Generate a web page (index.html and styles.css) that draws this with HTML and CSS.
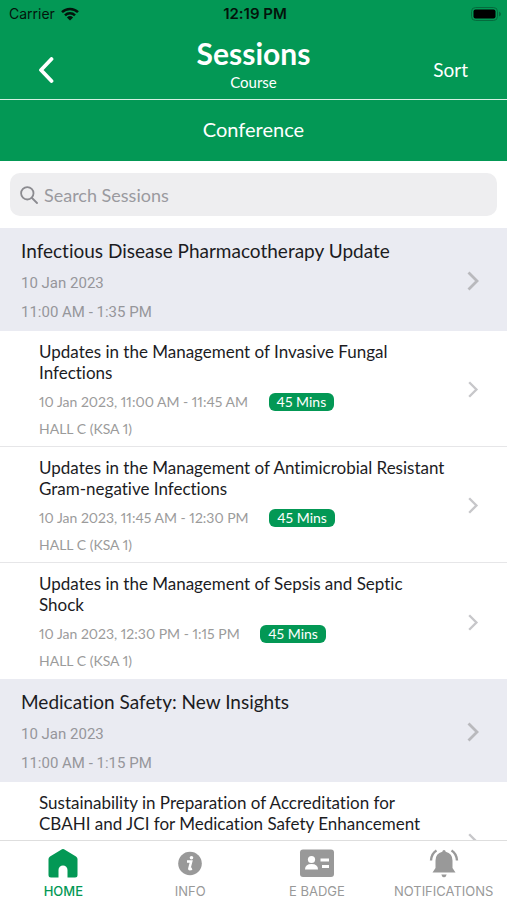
FILE: index.html
```html
<!DOCTYPE html>
<html lang="en">
<head>
<meta charset="utf-8">
<meta name="viewport" content="width=device-width, initial-scale=1">
<title>Sessions</title>
<link rel="stylesheet" href="styles.css">
</head>
<body>
<svg class="sprite" aria-hidden="true">
  <symbol id="chevron" viewBox="0 0 12 20"><path d="M1.500 1.500L10 10l-8.500 8.500" fill="none" stroke="currentColor" stroke-width="2.800"/></symbol>
</svg>
<div class="app">
  <header class="top">
    <div class="status">
      <span class="carrier">Carrier
        <svg class="wifi" viewBox="0 0 18 14" aria-hidden="true"><g fill="none" stroke="currentColor" stroke-width="2.500"><path d="M1 5.200a11.500 11.500 0 0 1 16 0"/><path d="M4 8.300a7.200 7.200 0 0 1 10 0"/></g><path d="M9 13.500L5.900 10.400a4.500 4.500 0 0 1 6.200 0z" fill="currentColor"/></svg>
      </span>
      <span class="clock">12:19 PM</span>
      <svg class="battery" viewBox="0 0 30 14" aria-hidden="true"><rect x=".5" y=".5" width="26" height="13" rx="4" fill="none" stroke="#056b3d"/><rect x="2.500" y="2.500" width="22" height="9" rx="2" fill="#000"/><path d="M28 4.500v5q2-1 2-2.500t-2-2.500z" fill="#056b3d"/></svg>
    </div>
    <div class="titlebar">
      <button class="back" aria-label="Back"><svg viewBox="0 0 16 26" aria-hidden="true"><path d="M13.500 2L3 13l10.500 11" fill="none" stroke="currentColor" stroke-width="3.800" stroke-linecap="round" stroke-linejoin="round"/></svg></button>
      <div class="heading"><h1>Sessions</h1><p>Course</p></div>
      <button class="sort">Sort</button>
    </div>
    <div class="band">Conference</div>
  </header>

  <main class="content">
    <div class="searchbar">
      <label class="search">
        <svg viewBox="0 0 18 18" aria-hidden="true"><g fill="none" stroke="currentColor" stroke-width="1.800" stroke-linecap="round"><circle cx="7.300" cy="7.300" r="6.200"/><path d="M12 12l5 5"/></g></svg>
        <input type="search" placeholder="Search Sessions" aria-label="Search Sessions">
      </label>
    </div>

    <section>
      <a class="group" href="#"><div><h2>Infectious Disease Pharmacotherapy Update</h2><p>10 Jan 2023</p><p>11:00 AM - 1:35 PM</p></div><svg class="chevron" aria-hidden="true"><use href="#chevron"/></svg></a>
      <a class="item" href="#"><div><h3>Updates in the Management of Invasive Fungal Infections</h3><p>10 Jan 2023, 11:00 AM - 11:45 AM <span class="pill">45 Mins</span></p><p>HALL C (KSA 1)</p></div><svg class="chevron" aria-hidden="true"><use href="#chevron"/></svg></a>
      <a class="item" href="#"><div><h3>Updates in the Management of Antimicrobial Resistant Gram-negative Infections</h3><p>10 Jan 2023, 11:45 AM - 12:30 PM <span class="pill">45 Mins</span></p><p>HALL C (KSA 1)</p></div><svg class="chevron" aria-hidden="true"><use href="#chevron"/></svg></a>
      <a class="item" href="#"><div><h3>Updates in the Management of Sepsis and Septic Shock</h3><p>10 Jan 2023, 12:30 PM - 1:15 PM <span class="pill">45 Mins</span></p><p>HALL C (KSA 1)</p></div><svg class="chevron" aria-hidden="true"><use href="#chevron"/></svg></a>
    </section>

    <section>
      <a class="group" href="#"><div><h2>Medication Safety: New Insights</h2><p>10 Jan 2023</p><p>11:00 AM - 1:15 PM</p></div><svg class="chevron" aria-hidden="true"><use href="#chevron"/></svg></a>
      <a class="item" href="#"><div><h3>Sustainability in Preparation of Accreditation for CBAHI and JCI for Medication Safety Enhancement</h3></div><svg class="chevron" aria-hidden="true"><use href="#chevron"/></svg></a>
    </section>
  </main>

  <nav class="tabs">
    <a class="active" href="#"><svg viewBox="0 0 36 32" aria-hidden="true"><path d="M18 2Q18.500 2 19 2.300L31 9.500Q32.500 10.500 32.500 12V28q0 2.500-2.500 2.500h-7.500v-7.500a4.500 4.500 0 0 0-9 0v7.500H6Q3.500 30.500 3.500 28V12q0-1.500 1.500-2.500L17 2.300Q17.500 2 18 2z" fill="currentColor"/></svg>HOME</a>
    <a href="#"><svg viewBox="0 0 36 32" aria-hidden="true"><circle cx="18" cy="16.500" r="11.800" fill="currentColor"/><circle cx="19.500" cy="10.800" r="1.800" fill="#fff"/><path d="M15 14.500h4.200l-1.900 7.200q-.2 1 2.700.1" fill="none" stroke="#fff" stroke-width="2.500"/></svg>INFO</a>
    <a href="#"><svg viewBox="0 0 36 32" aria-hidden="true"><rect x="1" y="2.500" width="34" height="27.500" rx="3" fill="currentColor"/><g fill="#fff"><circle cx="12.500" cy="12.500" r="3.600"/><path d="M6 22.500q0-5.500 6.500-5.500t6.500 5.500z"/><path d="M21.500 11.500H30v3h-8.500zM23 18h7v3h-7z"/></g></svg>E BADGE</a>
    <a href="#"><svg viewBox="0 0 36 32" aria-hidden="true"><path d="M18 3q1.500 0 1.700 1.700Q26.500 6.300 26.500 13.500V21l3 4.500H6.500l3-4.500V13.500Q9.500 6.300 16.300 4.700 16.500 3 18 3zM15.300 27.500h5.400q-.7 2.700-2.700 2.700t-2.700-2.700z" fill="currentColor"/><path d="M10.500 3.500Q5.500 6.500 5 13.500M25.500 3.500Q30.500 6.500 31 13.500" fill="none" stroke="currentColor" stroke-width="2.400"/></svg>NOTIFICATIONS</a>
  </nav>
</div>
</body>
</html>
```
FILE: styles.css
```css
* { box-sizing: border-box; margin: 0; }
body { font-family: Lato, "Liberation Sans", sans-serif; font-variant-ligatures: none; color: #1c1c1f; background: #fff; }
button { border: 0; padding: 0; background: none; color: inherit; font: inherit; cursor: pointer; }
a { color: inherit; text-decoration: none; }
svg { display: block; flex: none; }
.sprite { position: absolute; width: 0; height: 0; }
.app { display: flex; flex-direction: column; height: 100vh; }

.top { background: #039855; color: #fff; }
.status { display: grid; grid-template-columns: 1fr auto 1fr; align-items: center; height: 28px; padding: 0 6px 0 9px; font-family: Inter, sans-serif; font-size: 14px; line-height: 20px; color: #03140b; }
.carrier { display: flex; align-items: center; gap: 6px; }
.wifi { width: 18px; height: 14px; }
.clock { font-size: 15px; font-weight: 600; }
.battery { width: 30px; height: 14px; justify-self: end; }
.titlebar { display: grid; grid-template-columns: 1fr auto 1fr; align-items: center; height: 72px; border-bottom: 1px solid #d5f0e2; }
.back { justify-self: start; margin-left: 38px; padding-top: 13px; }
.back svg { width: 16px; height: 26px; }
.heading { text-align: center; }
h1 { font-size: 30px; line-height: 36px; font-weight: 700; }
.heading p { font-size: 15px; line-height: 22px; }
.sort { justify-self: end; margin-right: 39px; padding-top: 13px; font-size: 19px; line-height: 24px; }
.band { height: 61px; font-size: 20px; line-height: 58px; text-align: center; }

.content { flex: 1; min-height: 0; overflow: hidden; }
.searchbar { padding: 12px 10px; }
.search { display: flex; align-items: center; gap: 6px; height: 43px; padding: 0 10px; border-radius: 10px; background: #eeeef0; color: #8b8b90; }
.search svg { width: 18px; height: 18px; }
.search input { flex: 1; min-width: 0; border: 0; padding: 0; outline: 0; background: none; font-family: Lato, sans-serif; font-size: 18px; }
.search input::placeholder { color: #9a9a9f; opacity: 1; }

.group, .item { display: flex; align-items: center; justify-content: space-between; gap: 19px; }
.group > div, .item > div { align-self: flex-start; }
.group { padding: 10px 28px 4px 21px; background: #eaebf2; }
h2 { margin-bottom: 5px; font-size: 19px; line-height: 26px; font-weight: 400; }
.group p { font-family: Roboto, sans-serif; font-size: 15px; line-height: 29px; color: #96969b; }
.item { min-height: 116px; padding: 10px 28px 4px 39px; border-bottom: 1px solid #e6e6e8; }
.item:last-child { border-bottom: 0; }
h3 { margin-bottom: 5px; font-size: 17px; line-height: 21px; font-weight: 400; }
.item p { font-size: 14px; line-height: 27px; font-variant-numeric: proportional-nums; color: #9b9b9b; }
.pill { display: inline-block; margin-left: 17px; padding: 0 8px; border-radius: 6px; background: #039855; color: #fff; line-height: 18px; }
.chevron { width: 12px; height: 20px; margin-bottom: 4px; color: #b9b9bd; }
.item .chevron { height: 17px; color: #c7c7ca; }

.tabs { display: grid; grid-template-columns: repeat(4, 1fr); height: 60px; border-top: 1px solid #dedede; background: #fff; }
.tabs a { display: flex; flex-direction: column; align-items: center; gap: 2px; padding-top: 6px; font-family: Inter, sans-serif; font-size: 13px; line-height: 20px; color: #999; }
.tabs svg { width: 36px; height: 32px; }
.tabs .active { font-weight: 500; color: #039855; }
```
